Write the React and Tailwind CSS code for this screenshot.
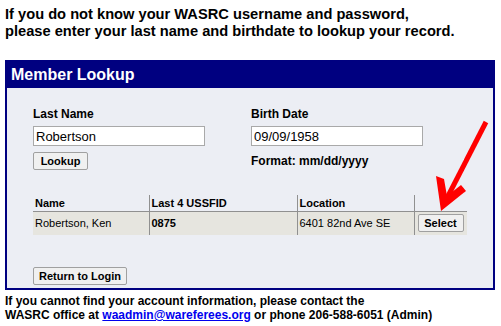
export default function App() {
  return (
    <div className="relative w-[501px] h-[326px] bg-white text-black" style={{ fontFamily: '"Liberation Sans", Arial, sans-serif' }}>
      <div className="pl-[5px] pt-[6px] text-[14.67px] font-bold leading-[17px]">
        <p>If you do not know your WASRC username and password,</p>
        <p>please enter your last name and birthdate to lookup your record.</p>
      </div>
      <div className="mt-[20px] ml-[5px] w-[490px] h-[230px] border-2 border-[#000080] bg-[#000080] flex flex-col">
        <div className="h-[26px] pl-[4px] flex items-center text-white font-bold text-[16px]">Member Lookup</div>
        <div className="flex-1 bg-[#eceef4] pl-[26px] pt-[19px]">
          <div className="flex">
            <div className="w-[218px]">
              <div className="text-[12px] font-bold leading-[15px]">Last Name</div>
              <input readOnly value="Robertson" className="mt-[4px] w-[172px] h-[20px] bg-white border border-[#a9a9a9] px-[2px] text-[13px] text-black outline-none" />
              <button className="block mt-[4px] h-[18px] w-[55px] text-[11px] font-bold border border-[#a0a0a0] bg-[#f0f0f0] rounded-[2px] leading-[14px]">Lookup</button>
            </div>
            <div>
              <div className="text-[12px] font-bold leading-[15px]">Birth Date</div>
              <input readOnly value="09/09/1958" className="mt-[4px] w-[172px] h-[20px] bg-white border border-[#a9a9a9] px-[2px] text-[13px] text-black outline-none" />
              <div className="mt-[5px] text-[12px] font-bold leading-[16px]">Format: mm/dd/yyyy</div>
            </div>
          </div>
          <table className="mt-[25px] w-[434px] text-[11px] border-collapse">
            <thead>
              <tr className="h-[16px] text-left">
                <th className="w-[116px] pl-[2px] font-bold border-b border-[#909090]">Name</th>
                <th className="w-[148px] pl-[2px] font-bold border-l border-b border-[#909090]">Last 4 USSFID</th>
                <th className="w-[117px] pl-[2px] font-bold border-l border-b border-[#909090]">Location</th>
                <th className="border-l border-b border-[#909090]"></th>
              </tr>
            </thead>
            <tbody>
              <tr className="h-[23px] bg-[#e6e5df]">
                <td className="pl-[2px]">Robertson, Ken</td>
                <td className="pl-[2px] font-bold border-l border-[#909090]">0875</td>
                <td className="pl-[2px] border-l border-[#909090]">6401 82nd Ave SE</td>
                <td className="pl-[3px] border-l border-[#909090]">
                  <button className="h-[18px] w-[46px] text-[11px] font-bold border border-[#a0a0a0] bg-[#f0f0f0] rounded-[2px]">Select</button>
                </td>
              </tr>
            </tbody>
          </table>
          <button className="block mt-[32px] h-[18px] w-[94px] text-[11px] font-bold border border-[#a0a0a0] bg-[#f0f0f0] rounded-[2px] leading-[14px]">Return to Login</button>
        </div>
      </div>
      <div className="pl-[5px] pt-[4px] text-[12px] font-bold leading-[14px]">
        <p>If you cannot find your account information, please contact the</p>
        <p>WASRC office at <a className="text-[#0000ee] underline">waadmin@wareferees.org</a> or phone 206-588-6051 (Admin)</p>
      </div>
      <svg className="absolute left-0 top-0 pointer-events-none" width="501" height="326">
        <line x1="486" y1="122" x2="446" y2="200" stroke="#ff0000" strokeWidth="5" />
        <polygon points="441,211 436,176 444,179 447,196 461,185 466,191" fill="#ff0000" />
      </svg>
    </div>
  );
}
